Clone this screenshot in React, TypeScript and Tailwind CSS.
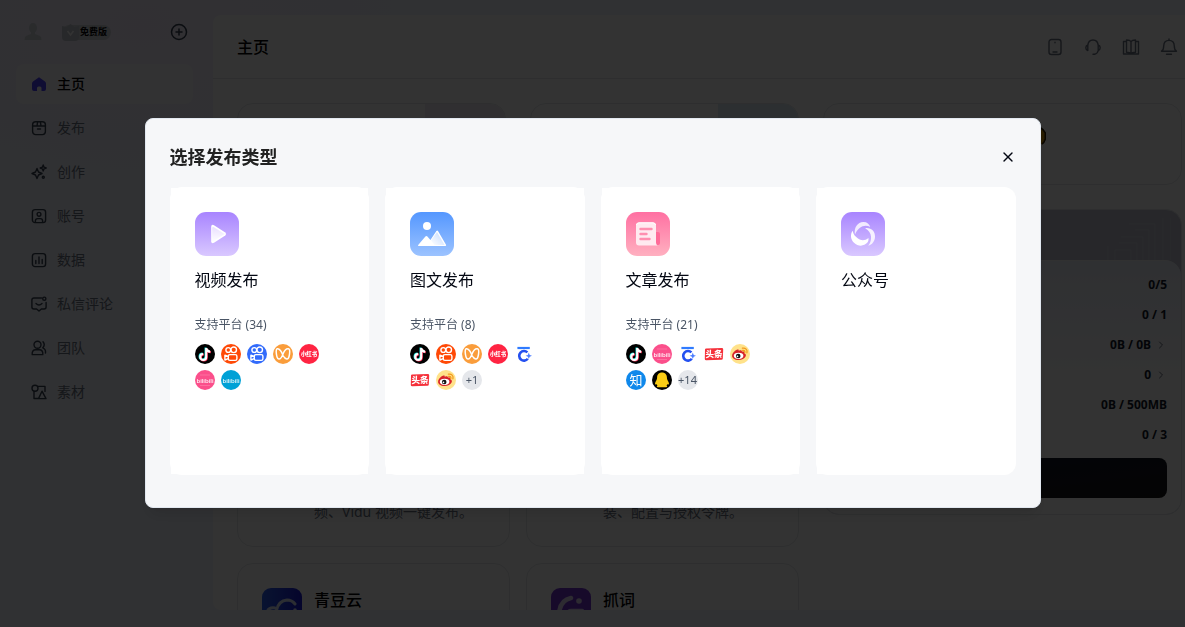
import type { ReactNode } from "react";
import { ChevronRight, CirclePlus, X } from "lucide-react";

type Platform =
  | "douyin"
  | "kuaishou"
  | "kuaishouBlue"
  | "channels"
  | "redbook"
  | "biliPink"
  | "biliBlue"
  | "baijia"
  | "toutiao"
  | "weibo"
  | "zhihu"
  | "penguin";

const CJK = "font-['Noto_Sans','Noto_Sans_CJK_SC',sans-serif]";

/* ---------- platform marks ---------- */

function KuaishouMark() {
  return (
    <g fill="none" stroke="#fff" strokeWidth="1.4">
      <circle cx="7.3" cy="6" r="2.4" />
      <circle cx="12.7" cy="5.8" r="2.8" />
      <rect x="7.3" y="10.6" width="8.6" height="5.800" rx="1.6" />
      <path d="M7.3 12.4 3.9 11.2v4.8l3.4-1.4" strokeLinejoin="round" />
    </g>
  );
}

function BiliMark() {
  return (
    <text x="10" y="12.600" textAnchor="middle" fontSize="6" fontWeight="500" fill="#fff">
      bilibili
    </text>
  );
}

const marks: Record<Platform, ReactNode> = {
  douyin: (
    <>
      <circle cx="10" cy="10" r="10" fill="#000" />
      <g fill="none" strokeWidth="2.1">
        <path d="M10.6 3.6v9a3 3 0 1 1-3-3M10.6 3.8c.4 2.200 1.900 3.300 4 3.500" stroke="#25f4ee" />
        <path d="M11.8 4.5v9a3 3 0 1 1-3-3M11.8 4.7c.4 2.200 1.900 3.300 4 3.500" stroke="#fe2c55" />
        <path d="M11.2 4v9a3 3 0 1 1-3-3M11.2 4.2c.4 2.200 1.900 3.300 4 3.500" stroke="#fff" />
      </g>
    </>
  ),
  kuaishou: (
    <>
      <circle cx="10" cy="10" r="10" fill="#ff4906" />
      <KuaishouMark />
    </>
  ),
  kuaishouBlue: (
    <>
      <circle cx="10" cy="10" r="10" fill="#326bfb" />
      <KuaishouMark />
    </>
  ),
  channels: (
    <>
      <circle cx="10" cy="10" r="10" fill="#fa9d3b" />
      <path
        d="M10 11.500C8.800 7.500 6.200 4.300 4.400 4.700c-2.200.5-1 10.300 1.700 10.300 1.500 0 2.900-2.300 3.900-5 1-2.700 3-5.500 5.300-5.300 2.600.4 1.200 10.500-1.500 10.300-1.500-.2-2.900-1.800-3.800-3.500"
        fill="none"
        stroke="#fff"
        strokeWidth="1.500"
        strokeLinejoin="round"
      />
    </>
  ),
  redbook: (
    <>
      <circle cx="10" cy="10" r="10" fill="#ff2442" />
      <text x="10" y="12" textAnchor="middle" fontSize="5.400" fontWeight="900" fill="#fff">
        小红书
      </text>
    </>
  ),
  biliPink: (
    <>
      <circle cx="10" cy="10" r="10" fill="#fb4f8b" />
      <path d="M5 5h10M5 15.500h10" stroke="#fd6f9f" />
      <BiliMark />
    </>
  ),
  biliBlue: (
    <>
      <circle cx="10" cy="10" r="10" fill="#00a1d6" />
      <BiliMark />
    </>
  ),
  baijia: (
    <>
      <circle cx="10" cy="10" r="10" fill="#fff" />
      <path d="M3.400 4h12.400" stroke="#2f7bff" strokeWidth="2.200" />
      <path d="M13.400 8.400A4.800 4.800 0 1 0 13.800 14.800" fill="none" stroke="#2450f0" strokeWidth="2.600" />
      <path d="m14.800 8.600.9 2.300 2.300.9-2.300.9-.9 2.300-.9-2.300-2.300-.9 2.300-.9z" fill="#4c7dff" />
    </>
  ),
  toutiao: (
    <>
      <circle cx="10" cy="10" r="10" fill="#fff" />
      <path d="M2.200 4.400 17.800 4q1.400 0 1.400 1.200l-.4 9.400q0 1.200-1.400 1.200L2.200 16.200Q.8 16.200 .8 15L1 5.600Q1 4.500 2.200 4.400z" fill="#f5313b" />
      <text x="10" y="13.200" textAnchor="middle" fontSize="8.500" fontWeight="800" fill="#fff">
        头条
      </text>
    </>
  ),
  weibo: (
    <>
      <circle cx="10" cy="10" r="10" fill="#ffe28a" />
      <path d="M8.600 6.800c1.200-.6 3.200-.9 3.400.8 1.800-.5 2.900.1 2.300 1.700 1.500.5 1.900 1.700 1.400 2.900-.9 2.200-3.900 3.900-7.300 3.900-3.600 0-6.600-1.900-6.300-4.500.2-2.400 3.400-5.800 5.500-6 1-.1 1.300.4 1 1.200z" fill="#d8232a" />
      <ellipse cx="8.600" cy="11.800" rx="4.800" ry="3.100" fill="#fff" />
      <circle cx="8.200" cy="12" r="2.300" fill="#111" />
      <circle cx="7.500" cy="12.400" r=".8" fill="#fff" />
      <path d="M12.400 4.200c3-.7 5.400 1.700 4.500 4.600M12.700 6.400c1.500-.3 2.500.7 2.100 2.100" fill="none" stroke="#f29a1f" strokeWidth="1.300" strokeLinecap="round" />
    </>
  ),
  zhihu: (
    <>
      <circle cx="10" cy="10" r="10" fill="#0f88eb" />
      <text x="10" y="14.600" textAnchor="middle" fontSize="13" fontWeight="400" fill="#fff">
        知
      </text>
    </>
  ),
  penguin: (
    <>
      <circle cx="10" cy="10" r="10" fill="#000" />
      <path d="M10 2.600c3.200 0 4.900 2.200 4.900 5 0 1.100.2 1.800.8 2.800.8 1.300 1.500 2.700 1.200 3.700-.2.600-.8.400-1.400-.2-.2.700-.6 1.200-1.100 1.600 1.100.5 1.200 1.700-.4 1.700H6c-1.600 0-1.500-1.200-.4-1.700-.5-.4-.9-.9-1.100-1.600-.6.600-1.200.8-1.400.2-.3-1 .4-2.400 1.200-3.700.6-1 .8-1.700.8-2.800 0-2.800 1.700-5 4.900-5z" fill="#facc15" />
    </>
  ),
};

function PlatformBadge({ name }: { name: Platform }) {
  return (
    <svg viewBox="0 0 20 20" className="size-5" aria-hidden="true">
      {marks[name]}
    </svg>
  );
}

/* ---------- publish type tiles ---------- */

function TileBase({ id, from, to }: { id: string; from: string; to: string }) {
  return (
    <>
      <defs>
        <linearGradient id={id} x1="0" y1="0" x2="0" y2="1">
          <stop offset="0" stopColor={from} />
          <stop offset="1" stopColor={to} />
        </linearGradient>
      </defs>
      <rect width="44" height="44" rx="11" fill={`url(#${id})`} />
    </>
  );
}

function VideoTile() {
  return (
    <svg viewBox="0 0 44 44" className="size-11" aria-hidden="true">
      <TileBase id="video" from="#a884ff" to="#d9c8ff" />
      <defs>
        <linearGradient id="play" x1="0" y1="0" x2="0" y2="1">
          <stop offset="0" stopColor="#e9dfff" />
          <stop offset="1" stopColor="#fff" />
        </linearGradient>
      </defs>
      <path d="M19 13.200 30.300 20.600q1.800 1.400 0 2.800L19 30.800q-2.800 1.200-2.800-1.600V14.800q0-2.800 2.800-1.600z" fill="#fff" />
      <path d="M19 15.200 29.600 22 17.200 30V15.800q.4-1.400 1.800-.6z" fill="url(#play)" />
    </svg>
  );
}

function ImageTile() {
  return (
    <svg viewBox="0 0 44 44" className="size-11" aria-hidden="true">
      <TileBase id="image" from="#5497ff" to="#9cc3ff" />
      <defs>
        <linearGradient id="peak" x1="1" y1="0" x2="0" y2="1">
          <stop offset=".3" stopColor="#d3e4ff" />
          <stop offset="1" stopColor="#fff" />
        </linearGradient>
      </defs>
      <circle cx="17" cy="14" r="4" fill="#fff" />
      <path d="M8.800 34q-1.400 0-.6-1L15.400 24.600q1-1 2 0L20.400 28l6-9q.8-1 1.600 0L36 32.800q.6 1.200-.8 1.200z" fill="#fff" />
      <path d="M21 28.400 27 20l7.600 13h-10z" fill="url(#peak)" />
    </svg>
  );
}

function ArticleTile() {
  return (
    <svg viewBox="0 0 44 44" className="size-11" aria-hidden="true">
      <TileBase id="article" from="#ff70a2" to="#ffb0c0" />
      <path d="M29 20h3q2 0 2 2v9q0 2-2 2h-3z" fill="#ff6a98" />
      <path d="M13 10.500h14q3 0 3 3v17q0 2 1.500 3H13q-3 0-3-3v-17q0-3 3-3z" fill="#ffeaf0" />
      <path d="M10.400 13q.6-2.200 2.600-2.200h14q2 0 2.600 2.200" stroke="#fff" fill="none" />
      <path d="M14.500 17h11M14.500 22h6M14.500 27h9" stroke="#ff8fb0" strokeWidth="2.400" strokeLinecap="round" />
    </svg>
  );
}

function OfficialTile() {
  return (
    <svg viewBox="0 0 44 44" className="size-11" aria-hidden="true">
      <TileBase id="official" from="#a884ff" to="#d9c8ff" />
      <path d="M14 22.500C12.600 15.500 16.800 10.200 22.200 10c3.800-.1 6.200 2 7 5-5-3.200-12-.5-15.200 7.500z" fill="#f1eaff" />
      <path d="M24.200 16.200c6.200-.8 10 3.400 9.800 8.600-.2 4.600-2.800 8-6.800 8.900 4.200-5 4.400-13.500-3-17.500z" fill="#f6f1ff" />
      <path d="M11.600 18.800c-2.600 4-2 8.800 1.400 12 4.200 3.900 10 3.700 13.400-.2 1-1.300 1.300-2.800 1-4.600-3 2.600-7 3-10.400.6-2.600-1.800-4.600-4-5.400-7.800z" fill="#fff" />
    </svg>
  );
}

interface PublishType {
  title: string;
  tile: ReactNode;
  count?: number;
  more?: string;
  platforms: Platform[];
}

const publishTypes: PublishType[] = [
  {
    title: "视频发布",
    tile: <VideoTile />,
    count: 34,
    platforms: ["douyin", "kuaishou", "kuaishouBlue", "channels", "redbook", "biliPink", "biliBlue"],
  },
  {
    title: "图文发布",
    tile: <ImageTile />,
    count: 8,
    more: "+1",
    platforms: ["douyin", "kuaishou", "channels", "redbook", "baijia", "toutiao", "weibo"],
  },
  {
    title: "文章发布",
    tile: <ArticleTile />,
    count: 21,
    more: "+14",
    platforms: ["douyin", "biliPink", "baijia", "toutiao", "weibo", "zhihu", "penguin"],
  },
  { title: "公众号", tile: <OfficialTile />, platforms: [] },
];

function PublishCard({ item }: { item: PublishType }) {
  return (
    <button type="button" className="group flex rounded-xl bg-white p-px text-left">
      <span className="flex min-h-[286px] flex-1 flex-col items-start bg-white p-6 group-last:rounded-r-xl">
        {item.tile}
        <span className="mt-3 text-base leading-6 text-gray-950">{item.title}</span>
        {item.count !== undefined && (
          <>
            <span className="mt-6 text-xs leading-[18px] text-gray-600">支持平台 ({item.count})</span>
            <span className="mt-2.5 flex flex-wrap gap-1.5">
              {item.platforms.map((p) => (
                <PlatformBadge key={p} name={p} />
              ))}
              {item.more && (
                <span className="flex size-5 items-center justify-center rounded-full bg-gray-200 text-[11px] text-gray-600">
                  {item.more}
                </span>
              )}
            </span>
          </>
        )}
      </span>
    </button>
  );
}

function PublishDialog() {
  return (
    <div className="fixed inset-0 flex items-center justify-center bg-black/80 pb-px">
      <section
        role="dialog"
        aria-modal="true"
        aria-labelledby="publish-title"
        className="w-full max-w-4xl rounded-lg border border-slate-200 bg-[#f6f7f9] p-6 shadow-lg"
      >
        <header className="flex h-7 items-center justify-between">
          <h2 id="publish-title" className="text-lg font-bold text-[#222]">
            选择发布类型
          </h2>
          <button type="button" aria-label="关闭" className="text-gray-950">
            <X className="size-4" strokeWidth={2} />
          </button>
        </header>
        <div className="mt-4 grid grid-cols-4 gap-4 pb-2">
          {publishTypes.map((item) => (
            <PublishCard key={item.title} item={item} />
          ))}
        </div>
      </section>
    </div>
  );
}

/* ---------- sidebar ---------- */

function NavIcon({ children }: { children: ReactNode }) {
  return (
    <svg viewBox="0 0 16 16" className="size-4 text-gray-700" fill="none" stroke="currentColor" strokeWidth="1.4" strokeLinecap="round" strokeLinejoin="round" aria-hidden="true">
      {children}
    </svg>
  );
}

const navItems: { label: string; icon: ReactNode }[] = [
  {
    label: "主页",
    icon: <path d="M8 1.200 14 5.600Q15 6.400 15 7.600V13q0 2-2 2h-2.500v-3q0-1.500-1.500-1.500H7.500Q6 10.500 6 12v3H3q-2 0-2-2V7.600Q1 6.400 2 5.600z" fill="#4c40ff" stroke="none" />,
  },
  {
    label: "发布",
    icon: (
      <>
        <rect x="1.600" y="1.800" width="12.800" height="12.800" rx="3" />
        <path d="M1.600 6h12.800M6.600 1.800 6 6M9.400 1.800 10 6M6.500 9h3" />
      </>
    ),
  },
  {
    label: "创作",
    icon: (
      <>
        <path d="M6 4.400 7.500 8 11 9.500 7.500 11 6 14.600 4.500 11 1 9.500 4.500 8z" />
        <path d="m12.200 1 .8 2.200 2.200.8-2.200.8-.8 2.200-.8-2.200-2.200-.8 2.200-.8z" />
        <circle cx="12.300" cy="13.200" r="1" />
      </>
    ),
  },
  {
    label: "账号",
    icon: (
      <>
        <rect x="1.400" y="1.600" width="13.200" height="13" rx="2.600" />
        <circle cx="8" cy="6.300" r="1.900" />
        <path d="M4.400 14.400v-1.600Q4.400 10.600 6.600 10.600h2.800q2.200 0 2.200 2.200v1.600" />
      </>
    ),
  },
  {
    label: "数据",
    icon: (
      <>
        <rect x="1.400" y="1.600" width="13.200" height="13" rx="2.600" />
        <path d="M4.800 8.500v3M8 5v6.500M11.200 7.500v4" />
      </>
    ),
  },
  {
    label: "私信评论",
    icon: (
      <>
        <path d="M10.500 2H3Q.9 2 .9 4v7q0 2 2.100 2h2.600L8 15l2.400-2H13q2.100 0 2.100-2V6.500M5 7.500q3 3 6 0" />
        <circle cx="13.300" cy="2.700" r="1.600" />
      </>
    ),
  },
  {
    label: "团队",
    icon: (
      <>
        <circle cx="6.500" cy="4.800" r="3.500" />
        <path d="M1.200 14.600q-.4-4.800 3.600-4.800h3.400q4 0 3.600 4.800zM12 1.800q2.600 3-.2 6 3.200 1.200 2.700 5.200" />
      </>
    ),
  },
  {
    label: "素材",
    icon: (
      <>
        <circle cx="4" cy="4.200" r="3" />
        <path d="M7 2.400h7v5M3 7.500v7h4.500M11 7.200l4 7.400H7.500z" />
      </>
    ),
  },
];

function Sidebar() {
  return (
    <aside className="w-[213px] shrink-0 pr-5 pl-4">
      <div className="flex h-16 items-center pr-[5px] pl-2">
        <svg viewBox="0 0 18 18" className="size-[18px] text-gray-300" fill="currentColor" aria-hidden="true">
          <ellipse cx="9" cy="5" rx="4" ry="5" />
          <path d="M7 9h4v2l5 2q1.500 1 1.500 4h-17Q.5 14 2 13l5-2z" />
        </svg>
        <span className="ml-5 flex h-[15px] items-center gap-px rounded-full bg-gray-300 pr-1 text-[9px] font-bold text-black">
          <svg viewBox="0 0 17 17" className="size-[17px]" aria-hidden="true">
            <path d="M0 2 4.500 3 8.500 0l4 3L17 2v11q0 4-4 4H4q-4 0-4-4z" fill="#c3c7cf" />
            <path d="m5.500 7 3 4 3-4" fill="none" stroke="#fff" strokeWidth="1.500" />
          </svg>
          免费版
        </span>
        <button type="button" aria-label="新建" className="ml-auto text-gray-700">
          <CirclePlus className="size-[18px]" strokeWidth={2} />
        </button>
      </div>
      <nav className="flex flex-col gap-1">
        {navItems.map((item, i) => (
          <a
            key={item.label}
            href="#"
            aria-current={i === 0 ? "page" : undefined}
            className={
              i === 0
                ? "flex h-10 items-center gap-2.5 rounded-lg bg-white/60 px-[15px] text-sm font-medium text-black"
                : "flex h-10 items-center gap-2.5 rounded-lg px-[15px] text-sm text-gray-500"
            }
          >
            <NavIcon>{item.icon}</NavIcon>
            {item.label}
          </a>
        ))}
      </nav>
    </aside>
  );
}

/* ---------- page content ---------- */

function HeaderIcon({ label, children }: { label: string; children: ReactNode }) {
  return (
    <button type="button" aria-label={label}>
      <svg viewBox="0 0 18 18" className="size-[18px]" fill="none" stroke="currentColor" strokeWidth="1.4" strokeLinecap="round" strokeLinejoin="round" aria-hidden="true">
        {children}
      </svg>
    </button>
  );
}

function HeaderActions() {
  return (
    <div className="flex gap-5 text-gray-500">
      <HeaderIcon label="手机">
        <rect x="3" y="1.500" width="12" height="15" rx="2.500" />
        <path d="M9 4.200v.6M7 14h4" />
      </HeaderIcon>
      <HeaderIcon label="客服">
        <path d="M3.800 7.500Q4.200 2 9 2t5.200 5.500M3.800 7v5.500Q1.800 12 1.800 9.800T3.800 7zM14.200 7v5.500q2-.5 2-2.700T14.200 7zM14.200 12.500q-.4 3-3.700 3.700H9" />
      </HeaderIcon>
      <HeaderIcon label="教程">
        <path d="M9 3.600v12.200M9 3.600Q8 2 4.500 2v12.200Q8 14.200 9 15.800 10 14.200 13.500 14.200V2Q10 2 9 3.600zM4.500 3.500h-3v12.500h15V3.500h-3" />
      </HeaderIcon>
      <HeaderIcon label="通知">
        <path d="M9 1v1.200M1.500 13.200q2.200-1.200 2.200-5.200Q3.900 2.400 9 2.400T14.300 8q0 4 2.200 5.200zM6.500 16.300h5" />
      </HeaderIcon>
    </div>
  );
}

function AppCard({ title, text, icon }: { title?: string; text?: string; icon?: ReactNode }) {
  return (
    <article className="flex h-[141px] gap-3 rounded-2xl border border-gray-200 p-6">
      <div className="size-10 shrink-0">{icon}</div>
      <div className="flex flex-1 flex-col justify-between">
        <h3 className="text-base leading-6 font-medium text-black">{title}</h3>
        <p className="text-sm leading-5 text-gray-500">{text}</p>
      </div>
    </article>
  );
}

const quota: { value: string; link?: boolean }[] = [
  { value: "0/5" },
  { value: "0 / 1" },
  { value: "0B / 0B", link: true },
  { value: "0", link: true },
  { value: "0B / 500MB" },
  { value: "0 / 3" },
];

function QuotaPanel() {
  return (
    <section className="flex flex-col overflow-hidden rounded-2xl border border-gray-200 bg-[#c0c3d2]">
      <div className="flex h-[50px] justify-end pr-2.5">
        <svg viewBox="0 0 64 50" className="h-full w-16" fill="none" stroke="#cdd0dd" aria-hidden="true">
          <path d="M64 8v42M56 8v42M48 14H22M48 14v36M42 20H28M42 20v30M36 27H14M36 27v23M30 33H12M30 33v17M24 40H8v10M24 40v10M1 36v14" />
        </svg>
      </div>
      <div className="rounded-t-2xl border-t border-gray-100 bg-linear-to-b from-[#eaeffa] via-white via-50% to-white px-3.5 pt-[9px] pb-4">
        <ul>
          {quota.map((q) => (
            <li key={q.value} className="flex h-[30px] items-center justify-end gap-1 text-xs font-bold text-gray-900">
              {q.value}
              {q.link && <ChevronRight className="size-3 text-gray-500" />}
            </li>
          ))}
        </ul>
        <button type="button" aria-label="升级" className="mt-2 block h-10 w-full rounded-lg bg-linear-to-br from-slate-900 to-neutral-900" />
      </div>
    </section>
  );
}

export default function App() {
  return (
    <div className={`${CJK} flex h-screen overflow-hidden bg-[#f0f4fb] bg-radial-[at_12%_4%] from-[#f3ecfd] from-0% via-[#f0f3fc] via-20% to-[#f0f5fc]`}>
      <Sidebar />
      <main className="mt-[15px] mb-[17px] flex min-w-0 flex-1 flex-col overflow-hidden rounded-l-lg bg-white">
        <header className="flex h-16 shrink-0 items-center justify-between border-b border-gray-200 pr-[7px] pl-6">
          <h1 className="text-base font-medium text-black">主页</h1>
          <HeaderActions />
        </header>
        <div className="flex min-h-0 flex-1 items-start gap-6 pt-6 pr-[3px] pl-6">
          <div className="flex min-w-0 flex-1 flex-col">
            <div className="grid grid-cols-2 gap-6">
              <div className="flex h-[82px] justify-end overflow-hidden rounded-2xl border border-gray-200">
                <div className="w-20 bg-[#f0ecf5]" />
              </div>
              <div className="flex h-[82px] justify-end overflow-hidden rounded-2xl border border-gray-200">
                <div className="w-20 bg-[#dcebf6]" />
              </div>
            </div>
            <div className="mt-[221px] grid grid-cols-2 gap-4">
              <AppCard text="频、Vidu 视频一键发布。" />
              <AppCard text="装、配置与授权令牌。" />
              <AppCard
                title="青豆云"
                icon={
                  <svg viewBox="0 0 40 40" className="size-10" aria-hidden="true">
                    <defs>
                      <linearGradient id="cloud" x1="0" y1="0" x2="1" y2="0">
                        <stop offset="0" stopColor="#2c62f0" />
                        <stop offset="1" stopColor="#1a18d8" />
                      </linearGradient>
                    </defs>
                    <rect width="40" height="40" rx="9" fill="url(#cloud)" />
                    <path d="M5 25q1-6 8-5M14 26q1-13 11-14 5 0 8 4" fill="none" stroke="#dbe3fb" strokeWidth="3" strokeLinecap="round" />
                    <circle cx="33" cy="22" r="1.800" fill="#dbe3fb" />
                  </svg>
                }
              />
              <AppCard
                title="抓词"
                icon={
                  <svg viewBox="0 0 40 40" className="size-10" aria-hidden="true">
                    <rect width="40" height="40" rx="9" fill="#7434cf" />
                    <path d="M20 10Q9 12 8 26M31 23H20q-3 0-3 5" fill="none" stroke="#e2d6f5" strokeWidth="4.500" strokeLinecap="round" />
                    <circle cx="28" cy="13" r="2.800" fill="#e2d6f5" />
                  </svg>
                }
              />
            </div>
          </div>
          <div className="flex w-[359px] shrink-0 flex-col gap-6">
            <div className="flex h-[82px] justify-end rounded-2xl border border-gray-200 pt-[22px] pr-[135px]">
              <svg viewBox="0 0 20 20" className="size-5" aria-hidden="true">
                <path d="M6 4q4-5 8-2 6 4 6 9-1 8-8 8-8 0-9-8z" fill="#c98a00" />
                <path d="M14 1.500q4 2 5.300 5.500v6q-1.300 4-3.300 5" fill="none" stroke="#2a1d00" strokeWidth="1.600" />
              </svg>
            </div>
            <QuotaPanel />
          </div>
        </div>
      </main>
      <PublishDialog />
    </div>
  );
}
